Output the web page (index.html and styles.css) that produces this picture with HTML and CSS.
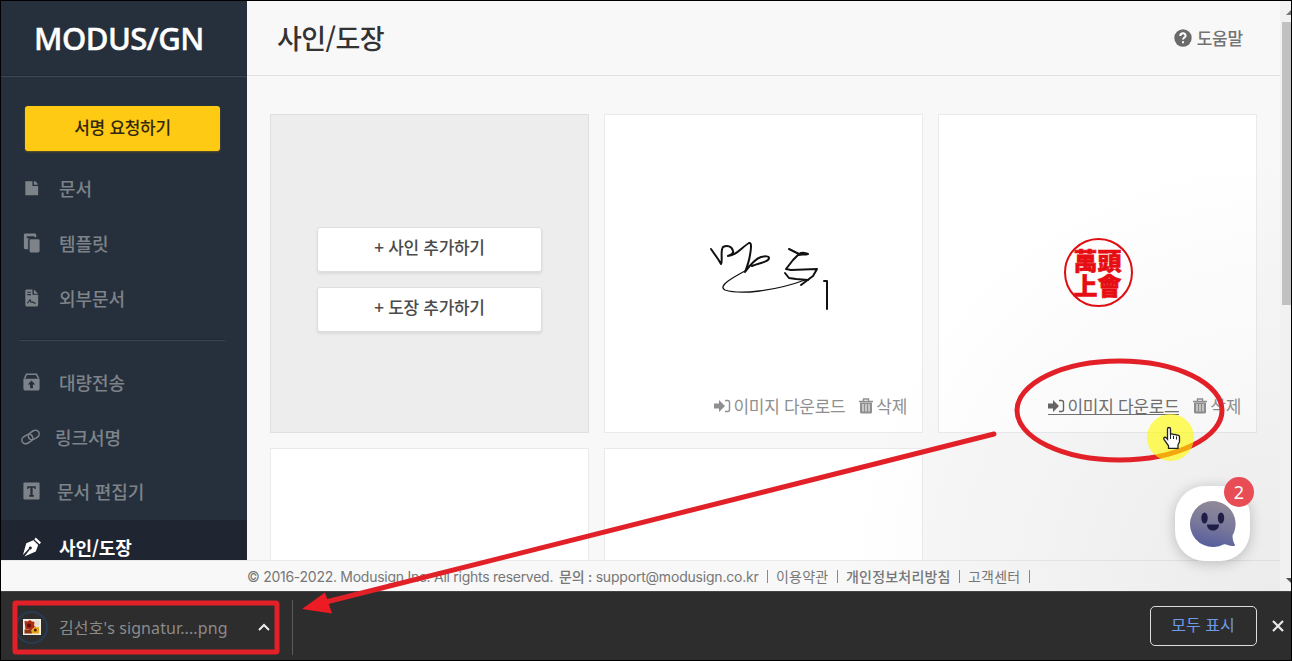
FILE: index.html
```html
<!DOCTYPE html>
<html lang="ko">
<head>
    <meta charset="UTF-8">
    <meta name="viewport" content="width=device-width, initial-scale=1.0">
    <title>사인/도장</title>
    <link rel="stylesheet" href="styles.css">
</head>
<body>
    <div class="window">
        <div class="app">
            <aside class="sidebar">
                <div class="logo"><span>MODUS/GN</span></div>
                <button class="request-btn">서명 요청하기</button>
                <ul class="menu">
                    <li>
                        <svg viewBox="0 0 20 20"><path d="M3.500 3H11v5h6v9.500H3.500z"/><path d="M12.500 3h1.500l2.500 2.500v1h-4z"/></svg>
                        <span>문서</span>
                    </li>
                    <li>
                        <svg viewBox="0 0 20 20"><path d="M3 0h10.500a1.500 1.500 0 0 1 1.500 1.500V4h-2V3H5v2h3.500A2 2 0 0 0 6.500 7v9.500H3.500a1.500 1.500 0 0 1-1.500-1.500V1.500A1.500 1.500 0 0 1 3 0z"/><rect x="8" y="6" width="10.500" height="14" rx="1.500"/></svg>
                        <span>템플릿</span>
                    </li>
                    <li>
                        <svg viewBox="0 0 20 20"><path d="M4.500 1H11v5.500h6V17a2 2 0 0 1-2 2H5.500a2 2 0 0 1-2-2V2.500A1.500 1.500 0 0 1 4.500 1z"/><path d="M12.500 1l4.500 4.500h-4.500z"/><path class="cut" d="M5.500 4h4M5.500 6.500h4M5.500 15.500c2-1 2-4 3.200-3.500.8.500-.2 2.500.8 2.500s1-1 2 0 2 1 3 1"/></svg>
                        <span>외부문서</span>
                    </li>
                </ul>
                <hr class="divider">
                <ul class="menu menu-tools">
                    <li>
                        <svg viewBox="0 0 20 20"><path fill-rule="evenodd" d="M1.500 6.500h17V17a2 2 0 0 1-2 2h-13a2 2 0 0 1-2-2zM10 8.500l-4 4.200h2.500v4h3v-4H14z"/><path class="line" d="M2.500 6.500l2.300-4.700h10.400l2.300 4.700"/></svg>
                        <span>대량전송</span>
                    </li>
                    <li class="near">
                        <svg viewBox="0 0 20 20"><g class="link" transform="rotate(-32 9 10)"><rect x="-1" y="6" width="12" height="8" rx="4"/><rect x="7" y="6" width="12" height="8" rx="4"/></g></svg>
                        <span>링크서명</span>
                    </li>
                    <li class="mid">
                        <svg viewBox="0 0 20 20"><path fill-rule="evenodd" d="M2.500 1h15a1 1 0 0 1 1 1v16a1 1 0 0 1-1 1h-15a1 1 0 0 1-1-1V2a1 1 0 0 1 1-1zM5.500 5v3h1.200l.5-1.300h1.600v7.600H7.500V16h5v-1.700h-1.300V6.700h1.600l.5 1.300h1.200V5z"/></svg>
                        <span>문서 편집기</span>
                    </li>
                    <li class="active">
                        <svg viewBox="0 0 20 20"><path d="M12 3l5 4.800-2.500 7L2.500 20l5.800-7.500a1.600 1.600 0 1 0-1-1L1 18.300 4.500 6z"/><path d="M13 2l1.500-2 5.500 5.200-1.500 2z"/></svg>
                        <span>사인/도장</span>
                    </li>
                </ul>
            </aside>

            <main class="main">
                <header class="header">
                    <h1>사인/도장</h1>
                    <a class="help">
                        <svg viewBox="0 0 18 18"><circle cx="9" cy="9" r="8.700"/><path d="M6.300 7c0-3.600 5.600-3.400 5.300-.2C11.400 8.500 9 8.500 9 10.600M9 12.300v2"/></svg>
                        <span>도움말</span>
                    </a>
                </header>

                <div class="cards">
                    <div class="card card-add">
                        <button>+ 사인 추가하기</button>
                        <button>+ 도장 추가하기</button>
                    </div>
                    <div class="card">
                        <svg class="signature" viewBox="0 0 160 100">
                            <path d="M21 29l7 10 3 5c2-3-1-13 2-17 4-2 9-1 10 4 1 3-3 4-5 5 8 0 14-9 21-13 3-1 2 6 1 12-1 7-3 12-5 17 5-7 10-13 16-15 4-1 8-1 8 1 0 4-10 5-17 8"/>
                            <path class="thin" d="M55 51C44 57 27 66 35 70c15 5 50 1 80-10"/>
                            <path d="M99 29l6 3 4 2c3-2 8-1 9 0-3 1-8 0-10 1l-5 5-7 9 5 1 26-1-4 7-12 9"/>
                            <path d="M95 53l4 5 7 1 12 1M134 61l3 0v28"/>
                        </svg>
                        <div class="card-actions">
                            <a class="download"><svg viewBox="0 0 17 14"><path d="M0 4.500h5V1l6 6-6 6V9.500H0z"/><path class="door" d="M11 1.500h2.500a2 2 0 0 1 2 2v7a2 2 0 0 1-2 2H11"/></svg><span>이미지 다운로드</span></a>
                            <a class="delete"><svg viewBox="0 0 14 16"><path fill-rule="evenodd" d="M1 4.500h12V14a1.500 1.500 0 0 1-1.500 1.500h-9A1.500 1.500 0 0 1 1 14zM3.500 6v7.500h1V6zm3 0v7.500h1V6zm3 0v7.500h1V6z"/><path class="lid" d="M0 3.500h14M4.500 3V1h5v2"/></svg><span>삭제</span></a>
                        </div>
                    </div>
                    <div class="card">
                        <div class="stamp">萬頭上會</div>
                        <div class="card-actions">
                            <a class="download hovered"><svg viewBox="0 0 17 14"><path d="M0 4.500h5V1l6 6-6 6V9.500H0z"/><path class="door" d="M11 1.500h2.500a2 2 0 0 1 2 2v7a2 2 0 0 1-2 2H11"/></svg><span>이미지 다운로드</span></a>
                            <a class="delete"><svg viewBox="0 0 14 16"><path fill-rule="evenodd" d="M1 4.500h12V14a1.500 1.500 0 0 1-1.500 1.500h-9A1.500 1.500 0 0 1 1 14zM3.500 6v7.500h1V6zm3 0v7.500h1V6zm3 0v7.500h1V6z"/><path class="lid" d="M0 3.500h14M4.500 3V1h5v2"/></svg><span>삭제</span></a>
                        </div>
                    </div>
                    <div class="card"></div>
                    <div class="card"></div>
                </div>
            </main>

            <div class="scrollbar">
                <i class="up"></i>
                <div class="thumb"></div>
                <i class="down"></i>
            </div>

            <footer class="footer">
                <span class="copy">© 2016-2022. Modusign Inc. All rights reserved.</span>
                <span class="contact"><b>문의 :</b> support@modusign.co.kr</span>
                <i></i>
                <span class="terms">이용약관</span>
                <i></i>
                <b class="privacy">개인정보처리방침</b>
                <i></i>
                <span class="center">고객센터</span>
                <i></i>
            </footer>

            <div class="chat-glow"></div>
            <div class="chat">
                <svg viewBox="0 0 46 46">
                    <defs>
                        <linearGradient id="face" x1=".6" y1="0" x2=".4" y2="1">
                            <stop offset="0" stop-color="#918a98"/>
                            <stop offset=".55" stop-color="#77779b"/>
                            <stop offset="1" stop-color="#565d9c"/>
                        </linearGradient>
                    </defs>
                    <path fill="url(#face)" d="M23 0a23 23 0 0 1 19.500 34.500c0 3 .5 6 2.500 9.500 0 1-1 1-2 1-4 0-6-2-9-1.800A23 23 0 1 1 23 0z"/>
                    <ellipse cx="14.500" cy="17" rx="3.200" ry="5.500" fill="#1f1c45"/>
                    <ellipse cx="31" cy="17" rx="3.200" ry="5.500" fill="#1f1c45"/>
                    <path fill="#1f1c45" d="M17 23.500h12c0 8-12 8-12 0z"/>
                </svg>
                <span class="badge">2</span>
            </div>
        </div>

        <div class="downloads">
            <div class="download-item">
                <div class="file-icon">
                    <svg viewBox="0 0 18 16">
                        <rect width="18" height="16" fill="#f4f1e8"/>
                        <rect x="1.500" y="1.500" width="15" height="13" fill="#e6ded2"/>
                        <path fill="#b02a12" d="M1.500 2l3 .5L7 1l2 1.500 2.500.5-.5 3 1 2-2 1.500L8 11.500 5 10l-2.500.5z"/>
                        <circle cx="6" cy="6.500" r="2" fill="#5b1208"/>
                        <path fill="#8c3510" d="M1.500 10.500H9v4H1.500z"/>
                        <path fill="#e8a514" d="M12 7l1.500 1.500 2.500-.5v6.500H9L8 11l2.500-1z"/>
                        <circle cx="12.300" cy="11" r="1.500" fill="#4d2108"/>
                    </svg>
                </div>
                <span class="file-name">김선호's signatur....png</span>
                <svg class="chevron" viewBox="0 0 12 8"><path d="M1 7l5-5 5 5"/></svg>
            </div>
            <div class="separator"></div>
            <button class="show-all">모두 표시</button>
            <svg class="close" viewBox="0 0 12 12"><path d="M1 1l10 10M11 1L1 11"/></svg>
        </div>

        <!-- red marks and mouse pointer drawn over the page -->
        <svg class="marks" viewBox="0 0 1292 661">
            <ellipse class="ring" cx="1119.500" cy="410.500" rx="102.500" ry="49.500"/>
            <path class="shaft" d="M994 434L322 603"/>
            <path class="head" d="M302 609l23-16.500 7 21z"/>
            <rect class="frame" x="15" y="603" width="262" height="49" rx="1"/>
            <circle class="click" cx="1170.500" cy="437.500" r="23.500"/>
            <path class="hand" d="M1167.500 429c0-2 3-2 3 0v6c0-1.500 3-1.500 3 .3 0-1.300 3-1.200 3 .5 0-1.200 3-1 3 1v5l-1.500 3v3.500h-9.500v-2.500l-4.500-6.500c-1-1.800 1-2.800 2.500-1.200l1 1.200z"/>
            <path class="fingers" d="M1170.500 435v4M1173.500 436v3M1176.500 436.500v3"/>
        </svg>
    </div>
</body>
</html>
```
FILE: styles.css
```css
* {
    box-sizing: border-box;
}

body {
    margin: 0;
    font-family: "Noto Sans CJK KR", sans-serif;
    overflow: hidden;
}

button {
    font-family: inherit;
    padding: 0;
    white-space: nowrap;
}

.window {
    position: relative;
    width: 1292px;
    height: 661px;
    border: 1px solid #000;
    background-color: #2d2d2d;
    overflow: hidden;
}

.app {
    position: relative;
    display: grid;
    grid-template-columns: 246px 1fr 11px;
    grid-template-rows: 559px 31px;
    height: 590px;
    background-color: #f8f8f8;
}

/* sidebar */
.sidebar {
    background-color: #26303c;
    overflow: hidden;
}

.logo {
    height: 76px;
    border-bottom: 1px solid #3e4955;
    box-shadow: inset 0 -1px #1f2732;
    color: #fff;
    font: 500 31px/75px "Noto Sans", sans-serif;
    letter-spacing: -0.5px;
    padding-left: 33px;
    white-space: nowrap;
    -webkit-text-stroke: 0.5px #fff;
}

.request-btn {
    display: block;
    width: 195px;
    height: 45px;
    margin: 29px 0 10px 24px;
    border: none;
    border-radius: 3px;
    background-color: #ffca13;
    box-shadow: 0 1px 2px #635722;
    color: #32290f;
    font-size: 17px;
    font-weight: 500;
    letter-spacing: -0.3px;
    line-height: 40px;
    padding-bottom: 3px;
}

.menu {
    list-style: none;
    margin: 0;
    padding: 0;
}

.menu li {
    display: flex;
    align-items: center;
    gap: 18px;
    height: 55px;
    padding: 0 0 2px 21px;
    color: #7d8389;
    font-size: 18px;
    font-weight: 500;
    letter-spacing: -0.1px;
}

.menu-tools li {
    padding-bottom: 1px;
}

.menu li.near {
    gap: 14px;
}

.menu li.mid {
    gap: 16px;
    padding-bottom: 3px;
}

.menu svg {
    width: 19px;
    height: 20px;
    fill: #7d8389;
    overflow: visible;
}

.menu .cut {
    fill: none;
    stroke: #26303c;
    stroke-width: 1.2;
}

.menu .line,
.menu .link {
    fill: none;
    stroke: #7d8389;
    stroke-width: 1.6;
}

.menu .active {
    padding-bottom: 2px;
    background-color: #1f2531;
    color: #fff;
    font-weight: 700;
}

.menu .active svg {
    fill: #fff;
}

.divider {
    height: 2px;
    margin: 13px 22px 14px 19px;
    border: none;
    border-top: 1px solid #1f2731;
    border-bottom: 1px solid #3a4651;
}

/* content */
.main {
    overflow: hidden;
}

.header {
    display: flex;
    justify-content: space-between;
    height: 75px;
    padding: 0 37px 0 30px;
    border-bottom: 1px solid #dfdfdf;
}

.header h1 {
    margin: 0;
    color: #333;
    font-size: 27px;
    font-weight: 500;
    letter-spacing: -0.6px;
    line-height: 74px;
}

.help {
    display: flex;
    align-items: center;
    gap: 5px;
    padding-bottom: 1px;
    color: #737373;
    font-size: 17px;
    font-weight: 500;
    letter-spacing: -0.2px;
}

.help svg {
    width: 18px;
    height: 18px;
    fill: #6a6a6a;
}

.help path {
    fill: none;
    stroke: #fff;
    stroke-width: 2;
}

.cards {
    display: grid;
    grid-template-columns: repeat(3, 319px);
    grid-auto-rows: 319px;
    gap: 15px;
    padding: 38px 23px;
}

.card {
    display: flex;
    flex-direction: column;
    align-items: center;
    justify-content: flex-end;
    border: 1px solid #eaeaea;
    background-color: #fff;
}

.card-add {
    justify-content: center;
    gap: 15px;
    padding-top: 12px;
    border-color: #dfdfdf;
    background-color: #ededed;
}

.card-add button {
    width: 225px;
    height: 45px;
    border: 1px solid #ddd;
    border-radius: 3px;
    background-color: #fff;
    box-shadow: 0 2px 3px rgba(0, 0, 0, 0.08);
    color: #4b4b4b;
    font-size: 17px;
    font-weight: 500;
    letter-spacing: -0.3px;
    line-height: 36px;
    padding-bottom: 6px;
}

.signature {
    width: 160px;
    height: 100px;
    margin: 0 0 73px 13px;
    fill: none;
    stroke: #111;
    stroke-width: 2;
    stroke-linecap: round;
    stroke-linejoin: round;
}

.signature .thin {
    stroke-width: 1.3;
}

.stamp {
    width: 69px;
    height: 69px;
    margin: 0 0 86px 1px;
    padding: 7px 8px;
    border: 2px solid #e00d12;
    border-radius: 50%;
    color: #e80d12;
    font-family: "Noto Sans CJK TC", "Noto Sans CJK KR", sans-serif;
    font-size: 24px;
    font-weight: 900;
    line-height: 25px;
    word-break: break-all;
    -webkit-text-stroke: 0.6px #e80d12;
}

.card-actions {
    display: flex;
    align-self: flex-end;
    gap: 14px;
    height: 26px;
    margin: 0 15px 13px 0;
    color: #8f8f8f;
    font-size: 17px;
    line-height: 26px;
    letter-spacing: -0.3px;
}

.card-actions a {
    display: flex;
    align-items: center;
    gap: 2px;
    white-space: nowrap;
}

.card-actions svg {
    width: 17px;
    height: 14px;
    fill: #8f8f8f;
}

.card-actions .delete {
    gap: 3px;
}

.card-actions .delete svg {
    width: 14px;
    height: 16px;
}

.card-actions .door,
.card-actions .lid {
    fill: none;
    stroke: #8f8f8f;
    stroke-width: 1.4;
}

.card-actions .hovered {
    color: #707070;
    background: linear-gradient(#707070, #707070) 0 21px / 100% 1px no-repeat;
}

.card-actions .hovered svg {
    fill: #666;
}

.card-actions .hovered .door {
    fill: none;
    stroke: #666;
}

/* scrollbar */
.scrollbar {
    grid-column: 3;
    grid-row: 1 / 3;
    display: flex;
    flex-direction: column;
    align-items: flex-end;
    background-color: #f1f1f1;
    overflow: hidden;
}

.scrollbar .thumb {
    width: 9px;
    height: 283px;
    margin-top: 7px;
    background-color: #c1c1c1;
}

.scrollbar i {
    border: 5px solid transparent;
    margin-right: -5px;
}

.scrollbar .up {
    border-top: none;
    border-bottom-color: #777;
    margin-top: 9px;
}

.scrollbar .down {
    border-bottom: none;
    border-top-color: #505050;
    margin: auto -5px 8px 0;
}

/* footer */
.footer {
    grid-column: 1 / 3;
    grid-row: 2;
    display: flex;
    align-items: center;
    border-top: 1px solid #e8e8e8;
    background-color: #f8f8f8;
    padding: 1px 0 0 246px;
    color: #777;
    font: 14px/30px Inter, "Noto Sans CJK KR", sans-serif;
    letter-spacing: -0.27px;
    white-space: nowrap;
}

.footer b {
    font-weight: 500;
}

.footer .copy {
    width: 312px;
}

.footer .contact {
    width: 200px;
    letter-spacing: -0.2px;
}

.footer .terms,
.footer .center {
    width: 53px;
    letter-spacing: 0.2px;
}

.footer .privacy {
    width: 105px;
    letter-spacing: 0.2px;
}

.footer i {
    width: 1px;
    height: 13px;
    margin: 0 8px;
    background-color: #888;
}

/* chat launcher */
.chat-glow {
    position: absolute;
    right: 11px;
    bottom: 0;
    width: 500px;
    height: 500px;
    background: radial-gradient(ellipse at bottom right, rgba(40, 40, 40, 0.06) 0%, rgba(40, 40, 40, 0) 62%);
}

.chat {
    position: absolute;
    left: 1174px;
    top: 485px;
    display: flex;
    align-items: center;
    justify-content: center;
    width: 75px;
    height: 75px;
    border-radius: 30px;
    background-color: #fff;
    box-shadow: 0 2px 14px rgba(0, 0, 0, 0.22);
}

.chat svg {
    width: 46px;
    height: 46px;
}

.badge {
    position: absolute;
    right: -4px;
    top: -9px;
    width: 30px;
    height: 30px;
    border-radius: 50%;
    background-color: #e84c55;
    color: #fff;
    font: 18px/30px "Noto Sans", sans-serif;
    text-align: center;
}

/* download bar */
.downloads {
    display: flex;
    align-items: center;
    height: 69px;
    border-top: 1px solid #444;
    background-color: #2d2d2d;
}

.download-item {
    display: flex;
    align-items: center;
    width: 269px;
    padding: 2px 0 0 14px;
}

.file-icon {
    display: flex;
    align-items: center;
    justify-content: center;
    flex-shrink: 0;
    width: 33px;
    height: 33px;
    border: 2px solid #293b52;
    border-radius: 50%;
}

.file-icon svg {
    width: 18px;
    height: 16px;
}

.file-name {
    width: 210px;
    flex-shrink: 0;
    padding: 0 0 1px 11px;
    color: #8b8b8b;
    font-family: "Noto Sans", "Noto Sans CJK KR", sans-serif;
    font-size: 16px;
    letter-spacing: 0.1px;
    white-space: nowrap;
}

.chevron {
    width: 12px;
    height: 8px;
    flex-shrink: 0;
    fill: none;
    stroke: #eee;
    stroke-width: 2;
}

.separator {
    width: 1px;
    height: 55px;
    margin-left: 22px;
    margin-top: 2px;
    background-color: #5c5c5c;
}

.show-all {
    width: 107px;
    height: 40px;
    margin: 0 15px 1px auto;
    border: 1px solid #ddd;
    border-radius: 5px;
    background: none;
    color: #6f9ae8;
    font-size: 16px;
    line-height: 32px;
    padding: 0 1px 4px 0;
}

.close {
    width: 12px;
    height: 12px;
    margin-right: 7px;
    stroke: #e8e8e8;
    stroke-width: 2.2;
}

/* marks over the page */
.marks {
    position: absolute;
    left: -1px;
    top: -1px;
    width: 1292px;
    height: 661px;
    fill: none;
}

.marks .ring,
.marks .shaft,
.marks .frame {
    stroke: #e22028;
    stroke-width: 5;
    stroke-linecap: round;
}

.marks .head {
    fill: #ed1c24;
}

.marks .click {
    fill: #fffb00;
    fill-opacity: 0.62;
}

.marks .hand {
    fill: #fff;
    stroke: #222;
    stroke-width: 1.3;
}

.marks .fingers {
    stroke: #222;
}
```
